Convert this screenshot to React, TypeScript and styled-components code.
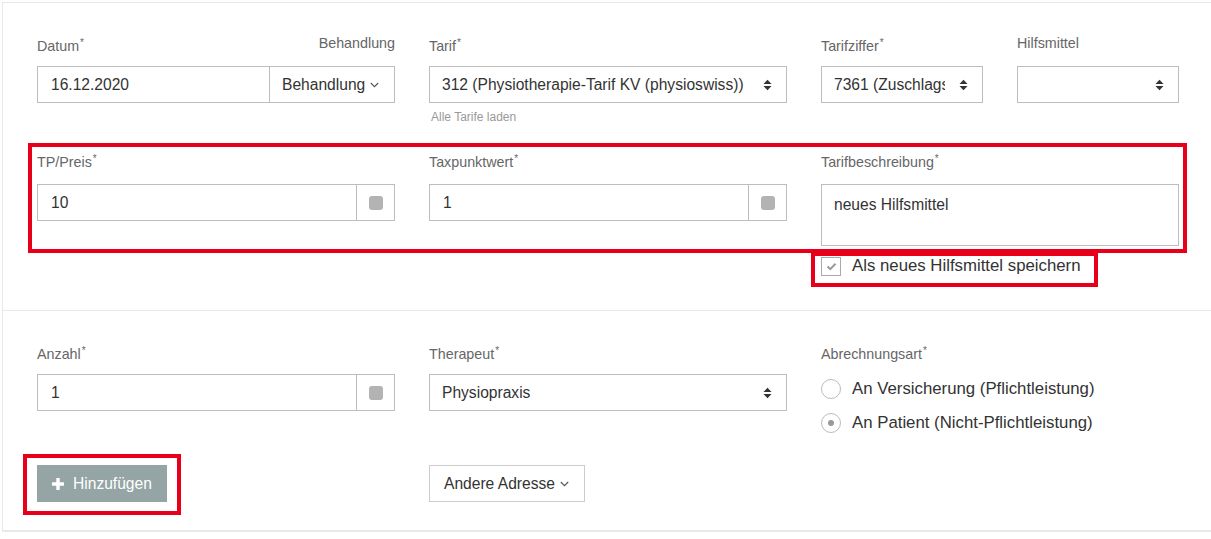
import React from "react";
import styled, { createGlobalStyle } from "styled-components";

const GlobalStyle = createGlobalStyle`
  html, body { margin: 0; padding: 0; background: #fff; }
  body { font-family: "Liberation Sans", Arial, sans-serif; }
  *, *::before, *::after { box-sizing: border-box; }
`;

const Page = styled.div`
  position: relative;
  width: 1211px;
  height: 539px;
  overflow: hidden;
  padding: 2px 0 0 2px;
  background: #fff;
`;

const Panel = styled.div`
  border-top: 1px solid #e8e8e8;
  border-left: 1px solid #e8e8e8;
`;

const Section = styled.section<{ $last?: boolean }>`
  padding: 30px 32px ${(p) => (p.$last ? "28px" : "34px")} 34px;
  border-bottom: ${(p) => (p.$last ? "2px" : "1px")} solid #e8e8e8;
`;

const Row = styled.div<{ $mt?: number }>`
  display: grid;
  grid-template-columns: repeat(3, 358px);
  column-gap: 34px;
  align-items: start;
  margin-top: ${(p) => p.$mt ?? 0}px;
`;

const Split = styled.div`
  display: grid;
  grid-template-columns: 162px 162px;
  column-gap: 34px;
`;

const Field = styled.div`
  display: flex;
  flex-direction: column;
`;

const LabelRow = styled.div<{ $mb?: number }>`
  display: flex;
  justify-content: space-between;
  height: 20px;
  line-height: 20px;
  font-size: 14.3px;
  color: #666;
  margin-bottom: ${(p) => p.$mb ?? 13}px;
  white-space: nowrap;
`;

const Req = styled.span`
  font-size: 10px;
  vertical-align: 5px;
  margin-left: 1px;
`;

const InputGroup = styled.div`
  display: flex;
  height: 37px;
`;

const TextInput = styled.input`
  flex: 1;
  min-width: 0;
  height: 37px;
  border: 1px solid #bdbdbd;
  border-radius: 0;
  padding: 0 13px;
  font-family: inherit;
  font-size: 15.6px;
  color: #333;
  background: #fff;
  outline: none;
`;

const Addon = styled.div`
  width: 38px;
  flex: none;
  border: 1px solid #bdbdbd;
  border-left: none;
  display: flex;
  align-items: center;
  justify-content: center;
`;

const AddonSquare = styled.span`
  width: 14px;
  height: 14px;
  border-radius: 3px;
  background: #b3b3b3;
`;

const DropButton = styled.button`
  width: 125px;
  flex: none;
  height: 37px;
  border: 1px solid #bdbdbd;
  border-left: none;
  border-radius: 0;
  background: #fff;
  font-family: inherit;
  font-size: 15.6px;
  color: #333;
  display: flex;
  align-items: center;
  gap: 5px;
  padding: 0 0 0 12px;
`;

const Select = styled.div`
  height: 37px;
  border: 1px solid #bdbdbd;
  background: #fff;
  display: flex;
  align-items: center;
  padding: 0 14px 0 12px;
  font-size: 15.6px;
  color: #333;
`;

const SelectText = styled.span`
  flex: 1;
  min-width: 0;
  overflow: hidden;
  white-space: nowrap;
  margin-right: 14px;
`;

const Hint = styled.div`
  margin-top: 6px;
  line-height: 16px;
  font-size: 12px;
  color: #999;
  padding-left: 2px;
`;

const TextArea = styled.textarea`
  height: 62px;
  border: 1px solid #bdbdbd;
  border-radius: 0;
  padding: 10px 12px 0;
  font-family: inherit;
  font-size: 15.6px;
  line-height: 20px;
  color: #333;
  resize: none;
  outline: none;
  display: block;
`;

const CheckRow = styled.label`
  display: flex;
  align-items: center;
  gap: 11px;
  margin-top: 10px;
  height: 20px;
  line-height: 20px;
  font-size: 16.8px;
  color: #333;
  white-space: nowrap;
`;

const CheckBox = styled.span`
  width: 20px;
  height: 19px;
  flex: none;
  border: 1px solid #aaa;
  display: flex;
  align-items: center;
  justify-content: center;
  background: #fff;
`;

const RadioGroup = styled.div`
  display: flex;
  flex-direction: column;
  gap: 10px;
  margin-top: 16px;
`;

const RadioRow = styled.label`
  display: flex;
  align-items: center;
  gap: 11px;
  height: 24px;
  font-size: 16.8px;
  color: #333;
  white-space: nowrap;
`;

const RadioCircle = styled.span<{ $checked?: boolean }>`
  width: 20px;
  height: 20px;
  flex: none;
  border-radius: 50%;
  border: 1px solid #bbb;
  background: #fff;
  display: flex;
  align-items: center;
  justify-content: center;
  &::after {
    content: "";
    width: 6px;
    height: 6px;
    border-radius: 50%;
    background: ${(p) => (p.$checked ? "#999" : "transparent")};
  }
`;

const PrimaryButton = styled.button`
  justify-self: start;
  height: 37px;
  border: none;
  border-radius: 0;
  background: #95a5a6;
  color: #fff;
  font-family: inherit;
  font-size: 15.6px;
  display: flex;
  align-items: center;
  gap: 9px;
  padding: 0 15px;
`;

const OutlineButton = styled.button`
  justify-self: start;
  height: 37px;
  border: 1px solid #ccc;
  border-radius: 0;
  background: #fff;
  color: #333;
  font-family: inherit;
  font-size: 15.6px;
  display: flex;
  align-items: center;
  gap: 5px;
  padding: 0 15px 0 14px;
`;

const Annotation = styled.div<{ $x: number; $y: number; $w: number; $h: number }>`
  position: absolute;
  left: ${(p) => p.$x}px;
  top: ${(p) => p.$y}px;
  width: ${(p) => p.$w}px;
  height: ${(p) => p.$h}px;
  border: 4px solid #e8001b;
  pointer-events: none;
`;

const SortIcon = () => (
  <svg width="9" height="12" viewBox="0 0 9 12" fill="#333">
    <path d="M0.5 5 L4.5 0.8 L8.5 5 Z" />
    <path d="M0.5 7 L4.5 11.2 L8.5 7 Z" />
  </svg>
);

const Chevron = () => (
  <svg width="9" height="6" viewBox="0 0 9 6" fill="none" stroke="#555" strokeWidth="1.1">
    <path d="M0.8 1 L4.5 4.7 L8.2 1" />
  </svg>
);

const CheckMark = () => (
  <svg width="11" height="9" viewBox="0 0 11 9" fill="none" stroke="#999" strokeWidth="2">
    <path d="M1.5 4.5 L4.3 7.2 L9.5 1.8" />
  </svg>
);

const PlusIcon = () => (
  <svg width="12" height="12" viewBox="0 0 12 12" fill="#fff">
    <rect x="4.3" y="0" width="3.4" height="12" rx="0.6" />
    <rect x="0" y="4.3" width="12" height="3.4" rx="0.6" />
  </svg>
);

const Label = ({ text, req }: { text: string; req?: boolean }) => (
  <span>
    {text}
    {req && <Req>*</Req>}
  </span>
);

export default function App() {
  return (
    <>
      <GlobalStyle />
      <Page>
        <Panel>
          <Section>
            <Row>
              <Field>
                <LabelRow>
                  <Label text="Datum" req />
                  <span>Behandlung</span>
                </LabelRow>
                <InputGroup>
                  <TextInput readOnly defaultValue="16.12.2020" />
                  <DropButton>
                    Behandlung <Chevron />
                  </DropButton>
                </InputGroup>
              </Field>
              <Field>
                <LabelRow>
                  <Label text="Tarif" req />
                </LabelRow>
                <Select>
                  <SelectText>312 (Physiotherapie-Tarif KV (physioswiss))</SelectText>
                  <SortIcon />
                </Select>
                <Hint>Alle Tarife laden</Hint>
              </Field>
              <Split>
                <Field>
                  <LabelRow>
                    <Label text="Tarifziffer" req />
                  </LabelRow>
                  <Select>
                    <SelectText>7361 (Zuschlags</SelectText>
                    <SortIcon />
                  </Select>
                </Field>
                <Field>
                  <LabelRow>
                    <Label text="Hilfsmittel" />
                  </LabelRow>
                  <Select>
                    <SelectText />
                    <SortIcon />
                  </Select>
                </Field>
              </Split>
            </Row>
            <Row $mt={24}>
              <Field>
                <LabelRow $mb={15}>
                  <Label text="TP/Preis" req />
                </LabelRow>
                <InputGroup>
                  <TextInput readOnly defaultValue="10" />
                  <Addon>
                    <AddonSquare />
                  </Addon>
                </InputGroup>
              </Field>
              <Field>
                <LabelRow $mb={15}>
                  <Label text="Taxpunktwert" req />
                </LabelRow>
                <InputGroup>
                  <TextInput readOnly defaultValue="1" />
                  <Addon>
                    <AddonSquare />
                  </Addon>
                </InputGroup>
              </Field>
              <Field>
                <LabelRow $mb={15}>
                  <Label text="Tarifbeschreibung" req />
                </LabelRow>
                <TextArea readOnly defaultValue="neues Hilfsmittel" />
                <CheckRow>
                  <CheckBox>
                    <CheckMark />
                  </CheckBox>
                  Als neues Hilfsmittel speichern
                </CheckRow>
              </Field>
            </Row>
          </Section>
          <Section $last>
            <Row>
              <Field>
                <LabelRow>
                  <Label text="Anzahl" req />
                </LabelRow>
                <InputGroup>
                  <TextInput readOnly defaultValue="1" />
                  <Addon>
                    <AddonSquare />
                  </Addon>
                </InputGroup>
              </Field>
              <Field>
                <LabelRow>
                  <Label text="Therapeut" req />
                </LabelRow>
                <Select>
                  <SelectText>Physiopraxis</SelectText>
                  <SortIcon />
                </Select>
              </Field>
              <Field>
                <LabelRow $mb={0}>
                  <Label text="Abrechnungsart" req />
                </LabelRow>
                <RadioGroup>
                  <RadioRow>
                    <RadioCircle />
                    An Versicherung (Pflichtleistung)
                  </RadioRow>
                  <RadioRow>
                    <RadioCircle $checked />
                    An Patient (Nicht-Pflichtleistung)
                  </RadioRow>
                </RadioGroup>
              </Field>
            </Row>
            <Row $mt={30}>
              <PrimaryButton>
                <PlusIcon />
                Hinzufügen
              </PrimaryButton>
              <OutlineButton>
                Andere Adresse <Chevron />
              </OutlineButton>
            </Row>
          </Section>
        </Panel>
        <Annotation $x={28} $y={143} $w={1159} $h={110} />
        <Annotation $x={811} $y={252} $w={287} $h={35} />
        <Annotation $x={23} $y={454} $w={158} $h={61} />
      </Page>
    </>
  );
}
